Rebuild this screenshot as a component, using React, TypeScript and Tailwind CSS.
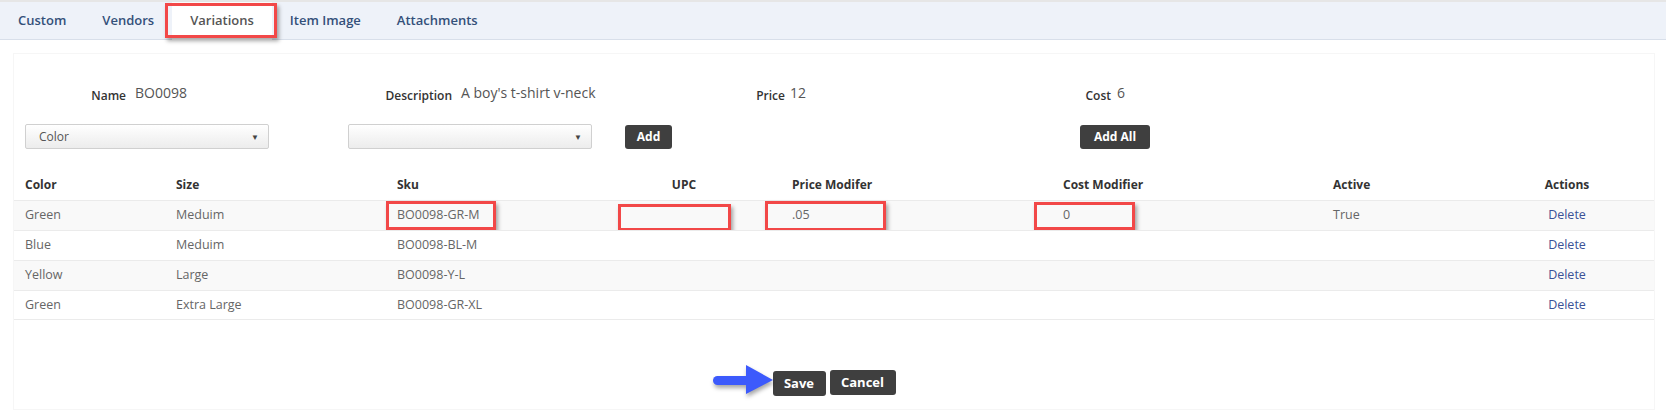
const tabs = ["Custom", "Vendors", "Variations", "Item Image", "Attachments"];

const rows = [
  { color: "Green", size: "Meduim", sku: "BO0098-GR-M", upc: "", price: ".05", cost: "0", active: "True" },
  { color: "Blue", size: "Meduim", sku: "BO0098-BL-M", upc: "", price: "", cost: "", active: "" },
  { color: "Yellow", size: "Large", sku: "BO0098-Y-L", upc: "", price: "", cost: "", active: "" },
  { color: "Green", size: "Extra Large", sku: "BO0098-GR-XL", upc: "", price: "", cost: "", active: "" },
];

const cols = "grid grid-cols-[151px_221px_201px_194px_271px_270px_158px_1fr]";

function RedBox({ className }: { className: string }) {
  return (
    <div
      className={`pointer-events-none absolute border-[3px] border-[#f24848] shadow-[2px_3px_4px_rgba(0,0,0,0.35)] ${className}`}
    />
  );
}

function Select({ label }: { label: string }) {
  return (
    <div className="flex h-[25px] w-[244px] items-center justify-between rounded-[2px] border border-[#d0d0d0] bg-gradient-to-b from-white to-[#ececec] pl-[13px] pr-[9px] text-[12px] text-[#555]">
      <span>{label}</span>
      <span className="text-[8px] text-[#444]">▼</span>
    </div>
  );
}

function Info({ label, value, w, gap }: { label: string; value: string; w: string; gap: string }) {
  return (
    <div className={`flex items-baseline ${w}`}>
      <span className="w-[101px] text-right text-[12px] font-semibold text-[#333]">{label}</span>
      <span className={`relative top-[-2px] text-[14px] text-[#555] ${gap}`}>{value}</span>
    </div>
  );
}

export default function App() {
  return (
    <div className="min-h-[419px] w-[1666px] bg-white font-['Open_Sans',sans-serif]">
      {/* tab strip */}
      <div className="relative border-t-2 border-b border-[#e6e6e6] border-b-[#d8dfea] bg-[#eef2f9]">
        <div className="flex h-[37px]">
          {tabs.map((t) => (
            <div
              key={t}
              className={`flex items-center px-[18px] text-[13px] font-semibold ${
                t === "Variations" ? "mb-[-1px] bg-white text-[#555]" : "text-[#34507a]"
              }`}
            >
              {t}
            </div>
          ))}
        </div>
        <RedBox className="left-[165px] top-[1px] h-[35px] w-[112px]" />
      </div>

      {/* card */}
      <div className="ml-[13px] mr-[11px] mt-[13px] border border-[#f6f6f6] pt-[30px] pb-[13px]">
        <div className="flex h-[21px] items-baseline px-[11px]">
          <Info label="Name" value="BO0098" w="w-[326px]" gap="ml-[9px]" />
          <Info label="Description" value="A boy's t-shirt v-neck" w="w-[333px]" gap="ml-[9px]" />
          <Info label="Price" value="12" w="w-[326px]" gap="ml-[5px]" />
          <Info label="Cost" value="6" w="w-[326px]" gap="ml-[6px]" />
        </div>

        <div className="mt-[19px] flex items-center px-[11px]">
          <Select label="Color" />
          <div className="ml-[79px]">
            <Select label="" />
          </div>
          <button className="ml-[33px] h-[24px] w-[47px] rounded-[3px] bg-[#3f3f3f] text-[12px] font-bold text-white">
            Add
          </button>
          <button className="ml-[408px] h-[24px] w-[70px] rounded-[3px] bg-[#3f3f3f] text-[12px] font-bold text-white">
            Add All
          </button>
        </div>

        {/* table */}
        <div className="mt-[21px] text-[12px]">
          <div className={`${cols} h-[30px] items-center font-bold text-[#333]`}>
            <div className="px-[11px]">Color</div>
            <div className="px-[11px]">Size</div>
            <div className="px-[11px]">Sku</div>
            <div className="px-[11px] text-center">UPC</div>
            <div className="px-[11px]">Price Modifer</div>
            <div className="px-[11px]">Cost Modifier</div>
            <div className="px-[11px]">Active</div>
            <div className="px-[11px] text-center">Actions</div>
          </div>
          {rows.map((r, i) => (
            <div
              key={i}
              className={`${cols} relative h-[30px] items-center border-t border-[#ebebeb] text-[12.5px] text-[#666] ${
                i % 2 === 0 ? "bg-[#f9f9f9]" : "bg-white"
              } ${i === rows.length - 1 ? "border-b" : ""}`}
            >
              <div className="px-[11px]">{r.color}</div>
              <div className="px-[11px]">{r.size}</div>
              <div className="px-[11px]">{r.sku}</div>
              <div className="px-[11px]">{r.upc}</div>
              <div className="px-[11px]">{r.price}</div>
              <div className="px-[11px]">{r.cost}</div>
              <div className="px-[11px]">{r.active}</div>
              <div className="px-[11px] text-center text-[#3b5296]">Delete</div>
              {i === 0 && (
                <>
                  <RedBox className="left-[372px] top-0 h-[29px] w-[110px]" />
                  <RedBox className="left-[604px] top-[3px] h-[27px] w-[113px]" />
                  <RedBox className="left-[751px] top-0 h-[30px] w-[121px]" />
                  <RedBox className="left-[1020px] top-[1px] h-[28px] w-[101px]" />
                </>
              )}
            </div>
          ))}
        </div>

        <div className="mt-[50px] flex justify-center gap-[4px]">
          <div className="relative">
            <svg
              className="absolute right-full top-[-5px] drop-shadow-[1px_3px_2px_rgba(0,0,0,0.35)]"
              width="60"
              height="30"
              viewBox="0 0 60 30"
            >
              <rect x="0" y="11" width="38" height="9" rx="4.5" fill="#3c5afc" />
              <polygon points="33,0 60,15 33,29" fill="#3c5afc" />
            </svg>
            <button className="h-[25px] w-[53px] rounded-[3px] bg-[#3f3f3f] text-[13px] font-bold text-white">
              Save
            </button>
          </div>
          <button className="h-[25px] w-[66px] rounded-[3px] bg-[#3f3f3f] text-[13px] font-bold text-white">
            Cancel
          </button>
        </div>
      </div>
    </div>
  );
}
